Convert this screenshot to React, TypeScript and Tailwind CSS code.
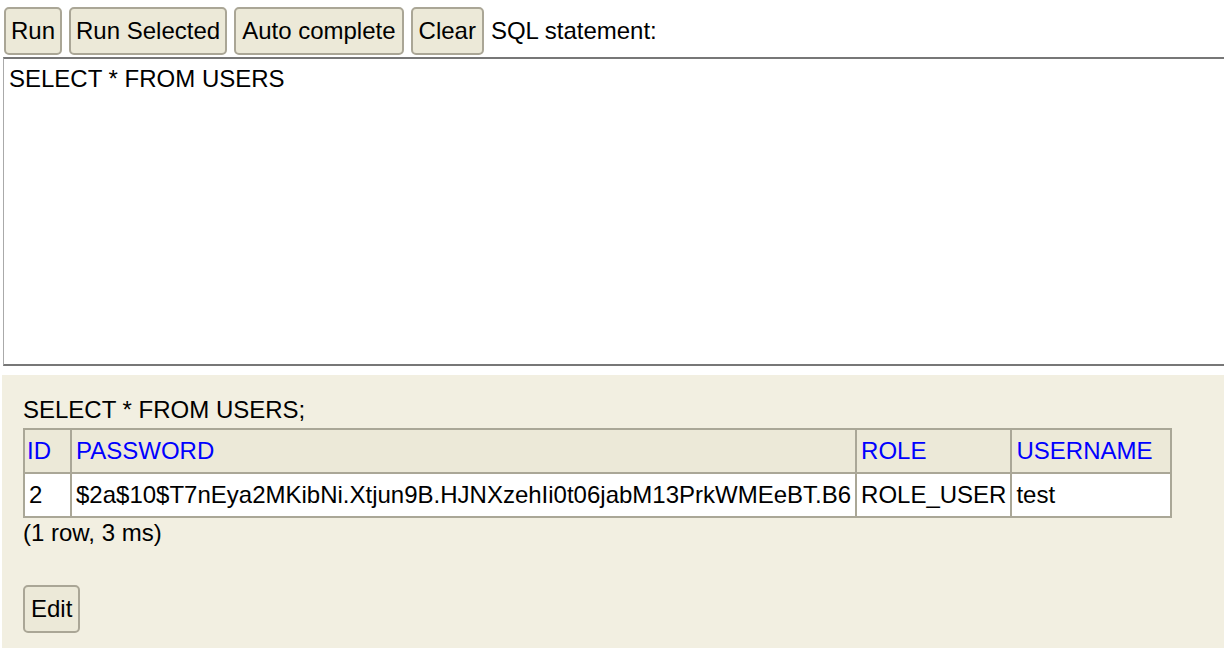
import React from 'react';

const btn =
    'h-[48px] rounded-[5px] border-2 border-[#aaa696] bg-[#ece9d8] text-black text-[24px] leading-none';

const cell = 'border-2 border-[#aaa797] px-[4px]';

export default function App() {
    return (
        <div className="w-[1224px] h-[648px] overflow-hidden bg-white font-['Liberation_Sans',Arial,sans-serif] text-[24px] text-black">
            {/* toolbar */}
            <div className="flex items-center gap-[7px] pl-[4px] pt-[6px] h-[56px]">
                <button className={btn + ' px-[5px]'}>Run</button>
                <button className={btn + ' px-[5px]'}>Run Selected</button>
                <button className={btn + ' px-[6px]'}>Auto complete</button>
                <button className={btn + ' px-[6px]'}>Clear</button>
                <span>SQL statement:</span>
            </div>

            {/* editor */}
            <div className="ml-[3px] mt-[1px] w-[1240px] h-[309px] border-t-2 border-b-2 border-l border-t-[#777] border-b-[#777] border-l-[#aaa] pl-[5px] pt-[8px] leading-none">
                SELECT * FROM USERS
            </div>

            {/* result */}
            <div className="ml-[2px] mt-[9px] h-[280px] bg-[#f2efe1] pl-[21px] pt-[23px]">
                <div className="leading-none mb-[6px]">SELECT * FROM USERS;</div>
                <table className="border-collapse border-2 border-[#aaa797]">
                    <thead>
                        <tr className="bg-[#ece9d8] text-[#0000ff] h-[44px]">
                            <th className={cell + ' font-normal text-left !px-[2px] w-[47px]'}>ID</th>
                            <th className={cell + ' font-normal text-left w-[785px]'}>PASSWORD</th>
                            <th className={cell + ' font-normal text-left w-[155px]'}>ROLE</th>
                            <th className={cell + ' font-normal text-left w-[160px]'}>USERNAME</th>
                        </tr>
                    </thead>
                    <tbody>
                        <tr className="bg-white h-[44px]">
                            <td className={cell}>2</td>
                            <td className={cell}>$2a$10$T7nEya2MKibNi.Xtjun9B.HJNXzehIi0t06jabM13PrkWMEeBT.B6</td>
                            <td className={cell}>ROLE_USER</td>
                            <td className={cell}>test</td>
                        </tr>
                    </tbody>
                </table>
                <div className="leading-none mt-[3px]">(1 row, 3 ms)</div>
                <button className={btn + ' px-[6px] mt-[40px]'}>Edit</button>
            </div>
        </div>
    );
}
